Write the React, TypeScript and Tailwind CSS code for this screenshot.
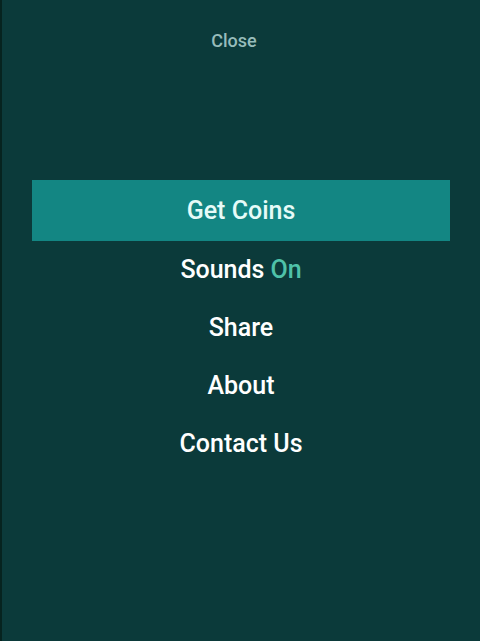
export default function App() {
  const items = ["Sounds", "Share", "About", "Contact Us"]
  return (
    <div className="flex h-[641px] w-[480px] bg-[#0b3a3a] font-['Roboto',sans-serif]">
      <div className="w-[2px] bg-[#06231f]" />
      <div className="flex flex-1 flex-col items-center">
        <button className="mt-[30px] mr-[14px] h-[22px] text-[18px] leading-[22px] font-medium text-[#97bcba]">
          Close
        </button>
        <div className="mt-[128px] flex w-full flex-col px-[30px]">
          <div className="flex h-[61px] items-center justify-center bg-[#138683] text-[25px] font-medium text-[#e6fbf8]">
            Get Coins
          </div>
          {items.map((item) => (
            <div
              key={item}
              className="flex h-[58px] items-center justify-center text-[25px] font-medium text-white"
            >
              {item}
              {item === "Sounds" && (
                <span className="ml-[6px] text-[#4fc2a9]">On</span>
              )}
            </div>
          ))}
        </div>
      </div>
    </div>
  )
}
